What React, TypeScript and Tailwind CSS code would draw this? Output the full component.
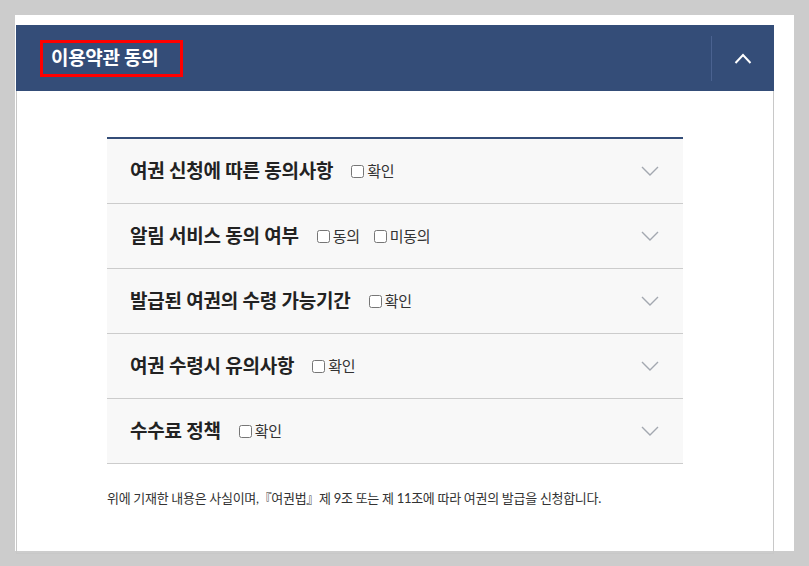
import React from "react";

type Item = {
  title: string;
  options: string[];
};

const ITEMS: Item[] = [
  { title: "여권 신청에 따른 동의사항", options: ["확인"] },
  { title: "알림 서비스 동의 여부", options: ["동의", "미동의"] },
  { title: "발급된 여권의 수령 가능기간", options: ["확인"] },
  { title: "여권 수령시 유의사항", options: ["확인"] },
  { title: "수수료 정책", options: ["확인"] },
];

const FONT = { fontFamily: '"Lato", "Noto Sans CJK KR", sans-serif' };

function ChevronDown() {
  return (
    <svg width="18" height="10" viewBox="0 0 18 10" fill="none">
      <path d="M1 1L9 9L17 1" stroke="#a3a8b0" strokeWidth="1.4" />
    </svg>
  );
}

function ChevronUp() {
  return (
    <svg width="18" height="11" viewBox="0 0 18 11" fill="none">
      <path d="M1.5 10L9 2L16.5 10" stroke="#ffffff" strokeWidth="2" />
    </svg>
  );
}

export default function App() {
  return (
    <div className="w-[809px] h-[566px] bg-[#cccccc] pt-[15px] pl-[15px] overflow-hidden" style={FONT}>
      <div className="w-[779px] h-[536px] bg-white pt-[10px] pl-[1px]">
        <div className="w-[758px] h-[529px] border border-t-0 border-[#c8c8c8] box-border">
          {/* header */}
          <div className="h-[66px] bg-[#344d78] flex items-center justify-between -mx-px">
            <div className="ml-[24px] w-[143px] h-[37px] border-[3px] border-[#ff0000] flex items-center pl-[8px]">
              <span className="text-white text-[19px] font-bold tracking-[-0.3px]">이용약관 동의</span>
            </div>
            <div className="flex items-center h-[45px]">
              <div className="w-px h-full bg-[#4a6290]" />
              <div className="w-[62px] flex justify-center items-center">
                <ChevronUp />
              </div>
            </div>
          </div>

          {/* accordion */}
          <div className="ml-[90px] mt-[46px] w-[576px]">
            <div className="border-t-2 border-[#344d78]">
              {ITEMS.map((item) => (
                <div
                  key={item.title}
                  className="h-[65px] bg-[#f8f8f8] border-b border-[#cccccc] flex items-center justify-between pl-[23px] pr-[24px]"
                >
                  <div className="flex items-center">
                    <span className="text-[19px] font-bold text-[#222222] tracking-[-0.2px]">{item.title}</span>
                    <div className="flex items-center ml-[18px] gap-[14px]">
                      {item.options.map((opt) => (
                        <label key={opt} className="flex items-center text-[15px] text-[#333333] tracking-[-0.3px]">
                          <input type="checkbox" className="w-[13px] h-[13px] m-0 mr-[3px]" />
                          {opt}
                        </label>
                      ))}
                    </div>
                  </div>
                  <ChevronDown />
                </div>
              ))}
            </div>
            <p className="mt-[25px] text-[13px] text-[#333333] tracking-[-0.3px]">
              위에 기재한 내용은 사실이며,『여권법』제 9조 또는 제 11조에 따라 여권의 발급을 신청합니다.
            </p>
          </div>
        </div>
      </div>
    </div>
  );
}
